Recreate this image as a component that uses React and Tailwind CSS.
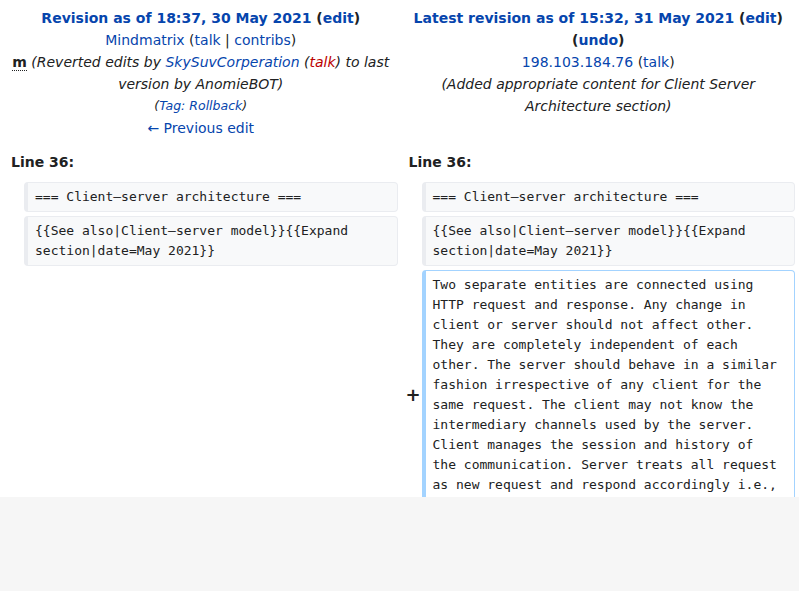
export default function App() {
  const link = "text-[#0645ad]";
  const sans = { fontFamily: '"DejaVu Sans", sans-serif' };
  const box =
    "rounded-[4px] border border-l-4 pl-[7px] pr-[10px] py-[4px] text-[13px] leading-[20px] whitespace-pre-wrap break-words text-[#202122]";
  const ctx = `${box} bg-[#f8f9fa] border-[#eaecf0]`;
  const add = `${box} bg-white border-[#a3d3ff]`;
  const mono = { fontFamily: '"DejaVu Sans Mono", monospace' };
  return (
    <div className="w-[799px] min-h-[591px] bg-[#f6f6f6]" style={sans}>
      <div className="h-[497px] overflow-hidden bg-white text-[14px] text-[#202122]">
        <div className="grid grid-cols-[16px_1fr_16px_1fr] gap-x-1 px-1">
          {/* Header left */}
          <div className="col-span-2 pt-[7px] text-center leading-[22px]">
            <div>
              <strong>
                <a className={link}>Revision as of 18:37, 30 May 2021</a>{" "}
                (<a className={link}>edit</a>)
              </strong>
            </div>
            <div>
              <a className={link}>Mindmatrix</a> (<a className={link}>talk</a> |{" "}
              <a className={link}>contribs</a>)
            </div>
            <div>
              <abbr className="font-bold border-b border-dotted border-[#202122]" style={{ textDecoration: "none" }}>
                m
              </abbr>{" "}
              <span className="italic">
                (Reverted edits by <a className={link}>SkySuvCorperation</a> (
                <a className="text-[#ba0000]">talk</a>) to last version by AnomieBOT)
              </span>
            </div>
            <div className="text-[12.5px] italic">
              (<a className={link}>Tag</a>
              <span className={link}>: </span>
              <a className={link}>Rollback</a>)
            </div>
            <div>
              <a className={link}>← Previous edit</a>
            </div>
          </div>
          {/* Header right */}
          <div className="col-span-2 pt-[7px] text-center leading-[22px]">
            <div>
              <strong>
                <a className={link}>Latest revision as of 15:32, 31 May 2021</a>{" "}
                (<a className={link}>edit</a>) (<a className={link}>undo</a>)
              </strong>
            </div>
            <div>
              <a className={link}>198.103.184.76</a> (<a className={link}>talk</a>)
            </div>
            <div className="italic">
              (Added appropriate content for Client Server Architecture section)
            </div>
          </div>

          {/* Line numbers */}
          <div className="col-span-2 mt-[12px] pl-[7px] font-bold leading-[22px]">Line 36:</div>
          <div className="col-span-2 mt-[12px] pl-[7px] font-bold leading-[22px]">Line 36:</div>

          {/* Context row 1 */}
          <div className="mt-[9px]"></div>
          <div className={`mt-[9px] ${ctx}`} style={mono}>=== Client—server architecture ===</div>
          <div className="mt-[9px]"></div>
          <div className={`mt-[9px] ${ctx}`} style={mono}>=== Client—server architecture ===</div>

          {/* Context row 2 */}
          <div className="mt-1"></div>
          <div className={`mt-1 ${ctx}`} style={mono}>{"{{See also|Client—server model}}{{Expand section|date=May 2021}}"}</div>
          <div className="mt-1"></div>
          <div className={`mt-1 ${ctx}`} style={mono}>{"{{See also|Client—server model}}{{Expand section|date=May 2021}}"}</div>

          {/* Added row */}
          <div className="mt-1"></div>
          <div className="mt-1"></div>
          <div className="mt-1 flex items-center justify-end">
            <span className="text-[18px] font-bold leading-none text-[#202122] translate-x-[3px]">+</span>
          </div>
          <div className={`mt-1 ${add}`} style={mono}>
            Two separate entities are connected using HTTP request and response. Any change in client or server should not affect other. They are completely independent of each other. The server should behave in a similar fashion irrespective of any client for the same request. The client may not know the intermediary channels used by the server. Client manages the session and history of the communication. Server treats all request as new request and respond accordingly i.e., stateless.
          </div>
        </div>
      </div>
    </div>
  );
}
